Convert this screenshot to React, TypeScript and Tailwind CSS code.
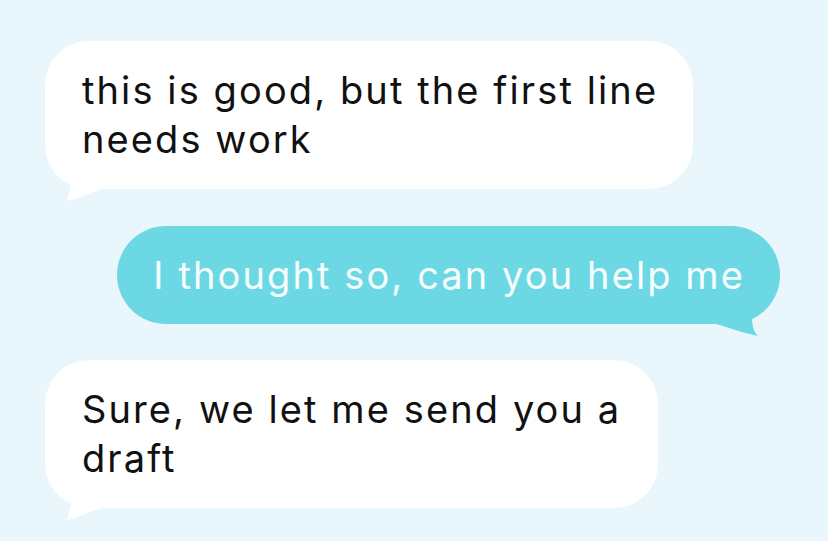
const LeftTail = () => (
  <svg
    className="absolute left-[18px] bottom-[-12px]"
    width="40"
    height="30"
    viewBox="0 0 40 30"
  >
    <path d="M9 0 C 10 8, 8 14, 4 30 C 16 28, 24 22, 40 18 L 40 0 Z" fill="#ffffff" />
  </svg>
);

const RightTail = () => (
  <svg
    className="absolute right-[18px] bottom-[-12px]"
    width="46"
    height="30"
    viewBox="0 0 46 30"
  >
    <path d="M0 18 C 14 22, 24 26, 42 30 C 36 24, 35 16, 37 0 L 0 0 Z" fill="#6cd8e4" />
  </svg>
);

type Msg = { text: string; mine?: boolean; width?: string };

const messages: Msg[] = [
  { text: 'this is good, but the first line needs work', width: 'w-[648px]' },
  { text: 'I thought so, can you help me', mine: true },
  { text: 'Sure, we let me send you a draft', width: 'w-[613px]' },
];

export default function App() {
  return (
    <div
      className="w-[828px] h-[541px] overflow-hidden bg-[#e9f6fb] pt-[41px] pl-[45px] pr-[48px] flex flex-col gap-[36px]"
      style={{ fontFamily: 'Inter, "Noto Sans", sans-serif' }}
    >
      {messages.map((m, i) =>
        m.mine ? (
          <div key={i} className="flex justify-end mt-px">
            <div className="relative rounded-full bg-[#6cd8e4] pl-[36px] pr-[35px] pt-[25px] pb-[24px] text-[38px] leading-[49px] text-[#f6fdfe] tracking-[2.1px] whitespace-nowrap">
              {m.text}
              <RightTail />
            </div>
          </div>
        ) : (
          <div key={i} className="flex">
            <div
              className={`relative rounded-[44px] bg-white pl-[37px] pr-[26px] pt-[25px] pb-[25px] text-[38px] leading-[49px] text-[#111111] tracking-[2.1px] ${m.width}`}
            >
              {m.text}
              <LeftTail />
            </div>
          </div>
        )
      )}
    </div>
  );
}
